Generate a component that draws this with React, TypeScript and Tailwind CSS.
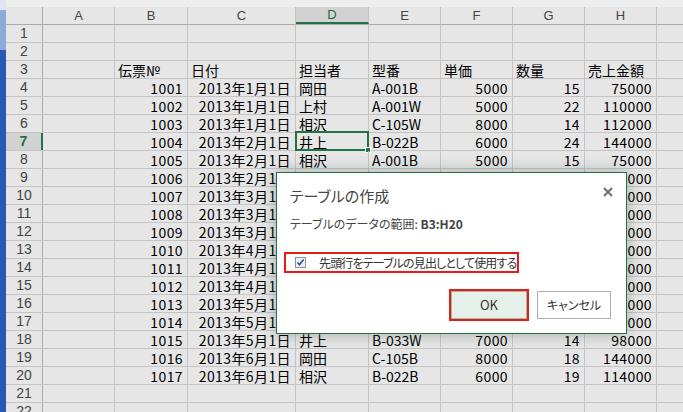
import React from 'react'

// 列幅（px）: A〜H
const cols = [
  { key: 'A', w: 'w-[72px]' },
  { key: 'B', w: 'w-[73px]' },
  { key: 'C', w: 'w-[108px]' },
  { key: 'D', w: 'w-[73px]' },
  { key: 'E', w: 'w-[72px]' },
  { key: 'F', w: 'w-[72px]' },
  { key: 'G', w: 'w-[72px]' },
  { key: 'H', w: 'w-[72px]' },
]

type Cell = { v: string; right?: boolean }
type Row = Record<string, Cell>

const data: [number, string, string, string, number, number, number][] = [
  [1001, '2013年1月1日', '岡田', 'A-001B', 5000, 15, 75000],
  [1002, '2013年1月1日', '上村', 'A-001W', 5000, 22, 110000],
  [1003, '2013年1月1日', '相沢', 'C-105W', 8000, 14, 112000],
  [1004, '2013年2月1日', '井上', 'B-022B', 6000, 24, 144000],
  [1005, '2013年2月1日', '相沢', 'A-001B', 5000, 15, 75000],
  [1006, '2013年2月1日', '上村', 'B-022B', 6000, 15, 90000],
  [1007, '2013年3月1日', '岡田', 'C-105W', 8000, 11, 88000],
  [1008, '2013年3月1日', '井上', 'A-001W', 5000, 19, 95000],
  [1009, '2013年3月1日', '相沢', 'B-022B', 6000, 20, 120000],
  [1010, '2013年4月1日', '上村', 'C-105B', 8000, 16, 128000],
  [1011, '2013年4月1日', '岡田', 'B-033W', 7000, 16, 112000],
  [1012, '2013年4月1日', '井上', 'A-001B', 5000, 22, 110000],
  [1013, '2013年5月1日', '相沢', 'B-022B', 6000, 21, 126000],
  [1014, '2013年5月1日', '上村', 'C-105W', 8000, 15, 120000],
  [1015, '2013年5月1日', '井上', 'B-033W', 7000, 14, 98000],
  [1016, '2013年6月1日', '岡田', 'C-105B', 8000, 18, 144000],
  [1017, '2013年6月1日', '相沢', 'B-022B', 6000, 19, 114000],
]

const rows: Row[] = []
for (let i = 1; i <= 22; i++) {
  if (i === 3) {
    rows.push({
      B: { v: '伝票№' },
      C: { v: '日付' },
      D: { v: '担当者' },
      E: { v: '型番' },
      F: { v: '単価' },
      G: { v: '数量' },
      H: { v: '売上金額' },
    })
  } else if (i >= 4 && i <= 20) {
    const d = data[i - 4]
    rows.push({
      B: { v: String(d[0]), right: true },
      C: { v: d[1], right: true },
      D: { v: d[2] },
      E: { v: d[3] },
      F: { v: String(d[4]), right: true },
      G: { v: String(d[5]), right: true },
      H: { v: String(d[6]), right: true },
    })
  } else {
    rows.push({})
  }
}

function CheckIcon() {
  return (
    <svg width="11" height="11" viewBox="0 0 11 11" className="shrink-0">
      <rect x="0.5" y="0.5" width="10" height="10" fill="#eef1f6" stroke="#8f8f8f" />
      <path d="M2.5 5.5 L4.5 7.8 L8.6 2.6" fill="none" stroke="#2c4f9e" strokeWidth="1.6" />
    </svg>
  )
}

function CloseIcon() {
  return (
    <svg width="10" height="10" viewBox="0 0 10 10">
      <path d="M1 1 L9 9 M9 1 L1 9" stroke="#6f6f6f" strokeWidth="2" />
    </svg>
  )
}

export default function App() {
  return (
    <div className="relative flex h-[412px] w-[683px] overflow-hidden bg-[#e6e6e6] font-['Noto_Sans_CJK_JP',sans-serif] text-black">
      {/* ウィンドウ左端 */}
      <div className="flex w-[6px] shrink-0 flex-col">
        <div className="h-[10px] bg-[#dfe6f2]" />
        <div className="h-[40px] bg-[#8eaad9]" />
        <div className="flex-1 bg-[#2a58b5]" />
      </div>

      <div className="flex min-w-0 flex-1 flex-col">
        <div className="h-[7px] shrink-0 bg-[#eeeeee]" />

        {/* 列見出し */}
        <div className="flex h-[18px] shrink-0 border-b border-[#ababab] text-[13px] text-[#444] font-['Liberation_Sans',sans-serif]">
          <div className="w-[37px] shrink-0 border-r border-[#ababab]" />
          {cols.map((c) => (
            <div
              key={c.key}
              className={`${c.w} flex shrink-0 items-center justify-center border-r border-[#c4c4c4] ${
                c.key === 'D' ? 'border-b-2 border-b-[#217346] bg-[#d2d2d2] text-[#1f6b3f]' : ''
              }`}
            >
              {c.key}
            </div>
          ))}
          <div className="flex-1" />
        </div>

        {/* 行 */}
        {rows.map((row, idx) => {
          const n = idx + 1
          const sel = n === 7
          return (
            <div key={n} className="flex h-[18px] shrink-0 border-b border-[#c4c4c4]">
              <div
                className={`flex w-[37px] shrink-0 items-center justify-center text-[14px] font-['Liberation_Sans',sans-serif] ${
                  sel
                    ? 'border-r-2 border-r-[#217346] bg-[#d2d2d2] font-bold text-[#217346]'
                    : 'border-r border-[#ababab] text-[#444]'
                }`}
              >
                {n}
              </div>
              {cols.map((c) => {
                const cell = row[c.key]
                const active = sel && c.key === 'D'
                return (
                  <div
                    key={c.key}
                    className={`${c.w} relative flex shrink-0 items-center whitespace-nowrap border-r border-[#c4c4c4] text-[14px] leading-none tabular-nums ${
                      cell?.right ? 'justify-end pr-[4px] tracking-[0.4px]' : 'pl-[3px]'
                    }`}
                  >
                    {cell?.v}
                    {active && (
                      <div className="absolute -top-[2px] -left-[1px] -right-[1px] -bottom-[1px] border-2 border-[#217346]">
                        <div className="absolute -right-[4px] -bottom-[4px] h-[6px] w-[6px] border border-white bg-[#217346]" />
                      </div>
                    )}
                  </div>
                )
              })}
              <div className="flex-1" />
            </div>
          )
        })}
      </div>

      {/* テーブルの作成 ダイアログ */}
      <div className="absolute left-[276px] top-[172px] z-10 flex h-[162px] w-[351px] flex-col border border-[#217346] bg-white text-[#444] shadow-[0_0_14px_rgba(40,70,50,0.35)] [font-feature-settings:'palt']">
        <div className="absolute right-[13px] top-[14px]">
          <CloseIcon />
        </div>
        <div className="pl-[13px] pt-[13px] text-[15px] leading-[20px]">テーブルの作成</div>
        <div className="mt-[10px] pl-[13px] text-[12px] leading-[16px]">
          テーブルのデータの範囲: <span className="font-bold">B3:H20</span>
        </div>
        <div className="ml-[7px] mt-[20px] flex h-[21px] w-[235px] items-center border-2 border-[#e81a1a] pl-[9px] text-[12px] text-[#333]">
          <CheckIcon />
          <span className="ml-[13px] whitespace-nowrap tracking-[-0.85px]">先頭行をテーブルの見出しとして使用する</span>
        </div>
        <div className="mt-[16px] flex items-center justify-end gap-[8px] pr-[15px]">
          <div className="h-[32px] w-[80px] border-2 border-[#e81a1a]">
            <div className="flex h-full w-full items-center justify-center border border-[#8fc0a2] bg-[#e6f0ea] text-[13px] text-[#333]">
              OK
            </div>
          </div>
          <div className="flex h-[28px] w-[74px] items-center justify-center border border-[#adadad] bg-white text-[12px] text-[#333]">
            キャンセル
          </div>
        </div>
      </div>
    </div>
  )
}
